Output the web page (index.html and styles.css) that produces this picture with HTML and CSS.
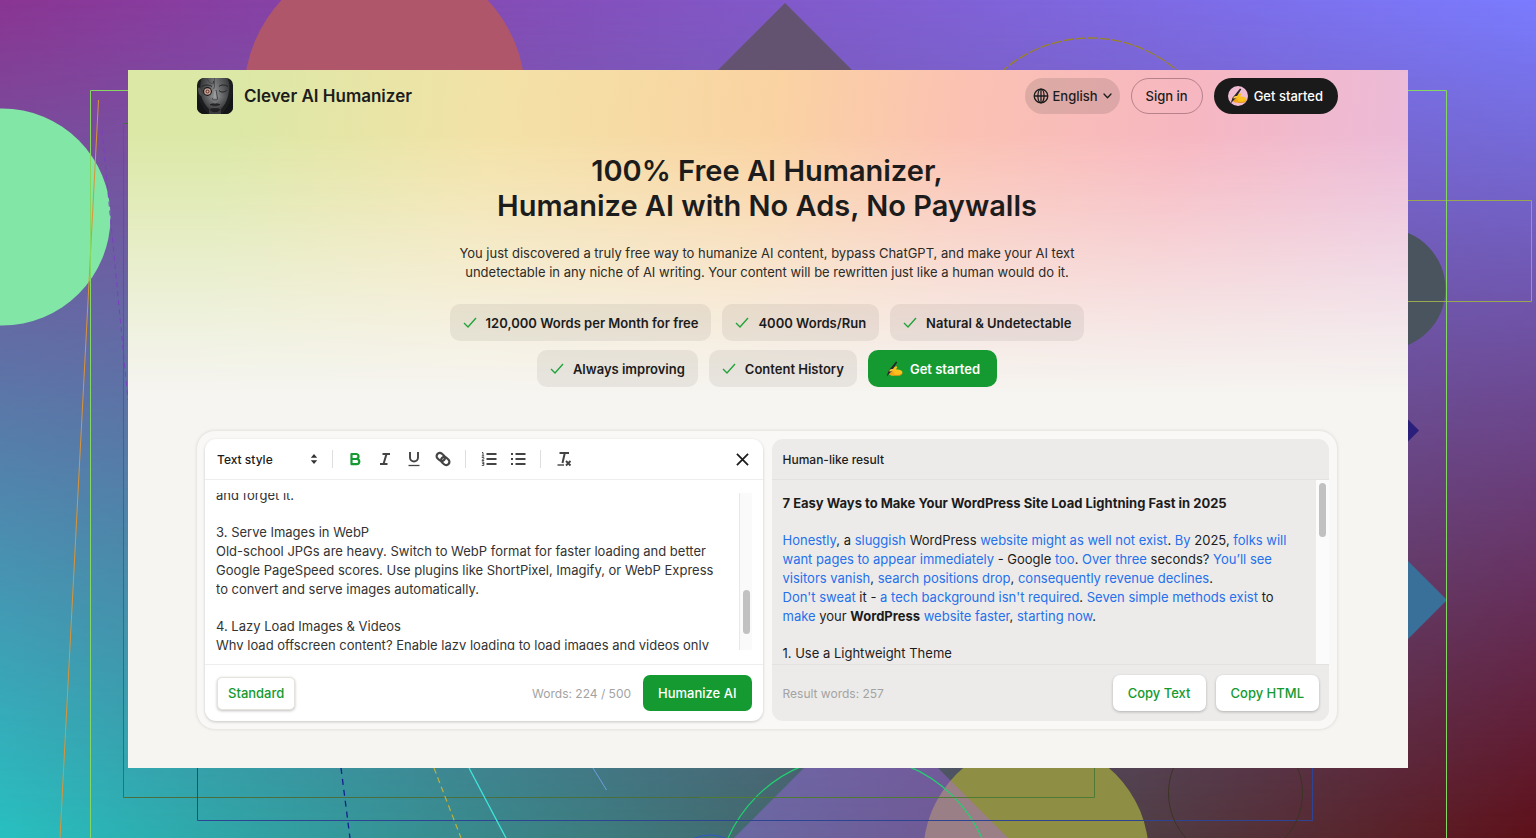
FILE: index.html
```html
<!DOCTYPE html>
<html lang="en">
<head>
<meta charset="utf-8">
<meta name="viewport" content="width=device-width, initial-scale=1">
<title>Clever AI Humanizer</title>
<link rel="stylesheet" href="styles.css">
</head>
<body>
<div class="backdrop" aria-hidden="true">
  <svg class="shapes" viewBox="0 0 1536 838" preserveAspectRatio="none" fill="none">
    <circle cx="2" cy="217" r="108.5" fill="#82e6a6"/>
    <circle cx="384.6" cy="96" r="140.8" fill="#b0566b"/>
    <path d="M785 3l110 110H675z" fill="#645271"/>
    <circle cx="1090" cy="171" r="133" stroke="#998322" stroke-width="1.300" stroke-dasharray="10 2"/>
    <circle cx="1385" cy="289" r="60.5" fill="#4a545f"/>
    <path d="M1419 430.500l-19-19v38z" fill="#2a1f7a"/>
    <path d="M1447 600l-60-60v120z" fill="#38709a"/>
    <path d="M98.500 100L60 838" stroke="#d9953a"/>
    <path d="M102 130L128 400" stroke="#7a3fc0" stroke-dasharray="5 4"/>
    <path d="M123.500 123.500H1094.500V797.500H123.500z" stroke="#4a6e3c"/>
    <path d="M197.500 150V820.500H1312.500V150" stroke="#2d4493"/>
    <path d="M341 768l9 70" stroke="#12208f" stroke-width="1.300" stroke-dasharray="6 5"/>
    <path d="M434 768l27 70" stroke="#bdb03c" stroke-width="1.200" stroke-dasharray="6 4"/>
    <path d="M469 768l37 70" stroke="#3fe6dc" stroke-width="1.300"/>
    <path d="M593 768l13.500 22" stroke="#6aa0dc"/>
    <circle cx="1036" cy="854" r="112.700" fill="#8e8f45"/>
    <path d="M871 701l150 150H721z" fill="#b065f9" fill-opacity=".37"/>
    <circle cx="855" cy="894.600" r="139" stroke="#22d070" stroke-width="1.200"/>
    <circle cx="710" cy="875" r="40" stroke="#2f58c8"/>
    <path d="M1094.500 768V797.500H700" stroke="#4f7a34"/>
    <path d="M700 820.500H1312.500" stroke="#2d4493"/>
    <circle cx="1235.500" cy="793" r="67" stroke="#3b3424"/>
    <path d="M1300 200.500H1531.500V301.500H1300" stroke="#99a850"/>
    <path d="M90.500 838V90.500H1446.500V838" stroke="#84d862"/>
  </svg>
</div>

<div class="page">
  <header class="topbar">
    <a class="brand" href="#">
      <svg class="brand-logo" viewBox="0 0 36 36" aria-hidden="true">
        <defs>
          <linearGradient id="skin" x1="0" x2="1"><stop offset="0" stop-color="#3a3b3d"/><stop offset=".5" stop-color="#97989a"/><stop offset="1" stop-color="#3f4042"/></linearGradient>
          <linearGradient id="shade" x1="0" y1="0" x2="0" y2="1"><stop offset="0" stop-color="#222" stop-opacity=".35"/><stop offset=".55" stop-color="#222" stop-opacity="0"/><stop offset="1" stop-color="#111" stop-opacity=".75"/></linearGradient>
          <clipPath id="tile"><rect width="36" height="36" rx="7"/></clipPath>
        </defs>
        <g clip-path="url(#tile)">
          <rect width="36" height="36" fill="#1c1d1f"/>
          <path d="M5 0h25c3 5 3 12 1 18-1 5-4 10-8 14-3 3-7 3-10 0C8 27 5 22 4 17 3 11 3 5 5 0z" fill="url(#skin)"/>
          <path d="M12 32l3-2h6l3 2v4H12z" fill="#3b3c3e"/>
          <path d="M5 0h25c3 5 3 12 1 18-1 5-4 10-8 14-3 3-7 3-10 0C8 27 5 22 4 17 3 11 3 5 5 0z" fill="url(#shade)"/>
          <path d="M1 10c1-1 3 0 3 2l1 6c-3 0-4-4-4-8z" fill="#4b4c4e"/>
          <path d="M17.500 0v9l-1 2M10 1l3 4 4 1" stroke="#37383a" stroke-width=".6" fill="none"/>
          <circle cx="16.500" cy="4" r=".7" fill="#1a1a1a"/>
          <path d="M5 8.500c3-2 7-2 10 0M22 8.500c2-2 6-2 9 0" stroke="#242527" stroke-width="1" fill="none"/>
          <circle cx="10.500" cy="13.500" r="4.400" fill="#1b1718"/>
          <circle cx="10.500" cy="13.500" r="3.300" fill="#c9a898"/>
          <circle cx="10.500" cy="13.500" r="2" fill="#6f3d39"/>
          <circle cx="10.500" cy="13.500" r="1" fill="#e0b29c"/>
          <path d="M22 12.500c2 2 5 2 7.500 0" stroke="#1c1c1e" stroke-width="1" fill="none"/>
          <path d="M19 12l1.500 8c.5 1.500-.5 2-2.500 2s-3-.5-2.500-2" stroke="#36373a" stroke-width=".8" fill="none"/>
          <path d="M18 13v7" stroke="#a5a6a8" stroke-width="1"/>
          <path d="M13 26.500c2-1.500 3.500-1.500 5-.8 1.500-.7 3-.7 5 .8-3 2.700-7 2.700-10 0z" fill="#333335"/>
          <path d="M13 26.500c3 .5 7 .5 10 0" stroke="#141415" stroke-width=".6" fill="none"/>
          <path d="M0 16c2 8 6 14 11 20H0zM36 14c-2 9-6 16-11 22h11z" fill="#141517"/>
        </g>
      </svg>
      <span>Clever AI Humanizer</span>
    </a>
    <nav class="topnav">
      <label class="lang">
        <svg width="16" height="16" viewBox="0 0 16 16" fill="none" stroke="#1c1c1c" stroke-width="1.300" aria-hidden="true"><circle cx="8" cy="8" r="6.800"/><ellipse cx="8" cy="8" rx="3.100" ry="6.800"/><path d="M1.200 8h13.600M8 1.200v13.600"/></svg>
        <select aria-label="Language"><option>English</option></select>
        <svg width="9" height="6" viewBox="0 0 9 6" fill="none" stroke="#1c1c1c" stroke-width="1.300" stroke-linecap="round" stroke-linejoin="round" aria-hidden="true"><path d="M1 1l3.500 3.700L8 1"/></svg>
      </label>
      <button class="signin" type="button">Sign in</button>
      <button class="start-dark" type="button">
        <span class="hand-disc"><svg width="18" height="18" viewBox="0 0 18 18" aria-hidden="true"><use href="#hand"/></svg></span>
        Get started
      </button>
    </nav>
  </header>

  <main>
    <section class="hero">
      <h1>100% Free AI Humanizer,<br>Humanize AI with No Ads, No Paywalls</h1>
      <p>You just discovered a truly free way to humanize AI content, bypass ChatGPT, and make your AI text<br>undetectable in any niche of AI writing. Your content will be rewritten just like a human would do it.</p>
      <ul class="perks">
        <li><svg class="tick" viewBox="0 0 14 11" aria-hidden="true"><path d="M1 6l4 4 8-9"/></svg>120,000 Words per Month for free</li>
        <li><svg class="tick" viewBox="0 0 14 11" aria-hidden="true"><path d="M1 6l4 4 8-9"/></svg>4000 Words/Run</li>
        <li><svg class="tick" viewBox="0 0 14 11" aria-hidden="true"><path d="M1 6l4 4 8-9"/></svg>Natural &amp; Undetectable</li>
      </ul>
      <div class="perk-row">
        <ul class="perks">
          <li><svg class="tick" viewBox="0 0 14 11" aria-hidden="true"><path d="M1 6l4 4 8-9"/></svg>Always improving</li>
          <li><svg class="tick" viewBox="0 0 14 11" aria-hidden="true"><path d="M1 6l4 4 8-9"/></svg>Content History</li>
        </ul>
        <button class="start-green" type="button">
          <svg width="18" height="18" viewBox="0 0 18 18" aria-hidden="true">
            <g id="hand">
              <path d="M4.500 9.800L10.500 6.500c1.200-.6 2 .4 1.500 1.200l-1 1.500 3.200.6c2.200.4 3.200 1.200 3.100 2.800-.1 1.800-1.600 2.900-4 2.900H7.500c-1.700 0-3-.6-3.400-2l-1-2z" fill="#fcc21b"/>
              <path d="M3.700 11l3.600-.8c1-.2 1.700 1 .8 1.400l-1.400.7 2.300.2c.9.200.9 1.200 0 1.300l-2.600.2 2.800.5c.5.300.2 1-.5 1H7.100c-2 0-3.400-.9-3.600-2.200z" fill="#f2a01a"/>
              <path d="M9 15.300h4.500c2.200 0 3.600-1 3.800-2.600" stroke="#e08a16" stroke-width=".9" fill="none"/>
              <path d="M11 1.500l1.300.8-5.700 8.900-5 5.300 1.900-5.800L6 7.800z" fill="#27272b"/>
              <path d="M4.500 9.900c1.600-1 3-1.200 3.600-.6.500.6-.4 1.200-1.600 1.600l-2 .8z" fill="#fdd04d"/>
            </g>
          </svg>
          Get started
        </button>
      </div>
    </section>

    <section class="workspace">
      <article class="panel panel-source">
        <div class="toolbar">
          <label class="style-pick">
            <select aria-label="Text style"><option>Text style</option></select>
            <svg width="8" height="10" viewBox="0 0 8 10" fill="#333" aria-hidden="true"><path d="M4 0l3.200 3.800H.8zM4 10L.8 6.200h6.400z"/></svg>
          </label>
          <div class="tool-group">
            <button type="button" aria-label="Bold"><svg viewBox="0 0 18 18" fill="none" stroke="#149a30" stroke-width="2.200" stroke-linejoin="round"><path d="M4.500 4H9a2.500 2.500 0 0 1 0 5H4.500zM4.500 9h5.200a2.600 2.600 0 0 1 0 5.200H4.500z"/></svg></button>
            <button type="button" aria-label="Italic"><svg viewBox="0 0 18 18" fill="none" stroke="#444" stroke-width="2"><path d="M6.500 4H14M4 14h7.500M10.500 4l-3 10"/></svg></button>
            <button type="button" aria-label="Underline"><svg viewBox="0 0 18 18" fill="none" stroke="#444" stroke-width="1.900"><path d="M5 2v5.500a4 4 0 0 0 8 0V2"/><path d="M3.500 15.500h11" stroke-width="1.300"/></svg></button>
            <button type="button" aria-label="Link"><svg viewBox="0 0 18 18" fill="none" stroke="#444" stroke-width="2.200"><g transform="rotate(42 9 9)"><rect x="1.500" y="5.800" width="9" height="6.400" rx="3.200"/><rect x="7.500" y="5.800" width="9" height="6.400" rx="3.200"/></g></svg></button>
          </div>
          <div class="tool-group">
            <button type="button" aria-label="Numbered list"><svg viewBox="0 0 18 18" fill="none" stroke="#444"><path d="M6.500 4H16.500M6.500 9H16.500M6.500 14H16.500" stroke-width="2"/><path d="M2 2.500h1V6M1.800 6h2.400M1.800 7.600h2v1L2 10.400h2.200M1.800 12h2v1.500H2.500h1.300v1.900h-2" stroke-width="1"/></svg></button>
            <button type="button" aria-label="Bulleted list"><svg viewBox="0 0 18 18" fill="none" stroke="#444" stroke-width="2"><path d="M6.500 4H16.500M6.500 9H16.500M6.500 14H16.500M2 4h2M2 9h2M2 14h2"/></svg></button>
          </div>
          <div class="tool-group">
            <button type="button" aria-label="Clear formatting"><svg viewBox="0 0 18 18" fill="none" stroke="#444"><path d="M4.500 3H14M9.800 3L7.500 13" stroke-width="2"/><path d="M2.500 15h6.500" stroke-width="1.400"/><path d="M11 11l4.500 4.500M15.500 11L11 15.500" stroke-width="1.900"/></svg></button>
          </div>
          <button class="close" type="button" aria-label="Close"><svg viewBox="0 0 14 14" fill="none" stroke="#1c1c1c" stroke-width="1.900"><path d="M1 1l12 12M13 1L1 13"/></svg></button>
        </div>
        <div class="panel-body source-body">
          <div class="source-scroll">
            <div class="source-text" role="textbox" aria-multiline="true" aria-label="Your text" contenteditable="true" spellcheck="false">
              <p>and forget it.</p>
              <p>3. Serve Images in WebP<br>Old-school JPGs are heavy. Switch to WebP format for faster loading and better<br>Google PageSpeed scores. Use plugins like ShortPixel, Imagify, or WebP Express<br>to convert and serve images automatically.</p>
              <p>4. Lazy Load Images &amp; Videos<br>Why load offscreen content? Enable lazy loading to load images and videos only</p>
            </div>
          </div>
          <div class="track track-source"><span class="thumb"></span></div>
        </div>
        <div class="panel-foot">
          <button class="mode" type="button">Standard</button>
          <span class="count push">Words: 224 / 500</span>
          <button class="run" type="button">Humanize AI</button>
        </div>
      </article>

      <article class="panel panel-result">
        <h2 class="result-title">Human-like result</h2>
        <div class="panel-body">
          <div class="result-text">
            <p><b>7 Easy Ways to Make Your WordPress Site Load Lightning Fast in 2025</b></p>
            <p><em>Honestly</em>, a <em>sluggish</em> WordPress <em>website might as well not exist</em>. <em>By</em> 2025, <em>folks will</em><br>
            <em>want pages to appear immediately</em> - Google <em>too</em>. <em>Over three</em> seconds? <em>You’ll see</em><br>
            <em>visitors vanish</em>, <em>search positions drop</em>, <em>consequently revenue declines</em>.<br>
            <em>Don't sweat</em> it - <em>a tech background isn't required</em>. <em>Seven simple methods exist</em> to<br>
            <em>make</em> your <b>WordPress</b> <em>website faster</em>, <em>starting now</em>.</p>
            <p>1. Use a Lightweight Theme</p>
          </div>
          <div class="track track-result"><span class="thumb"></span></div>
        </div>
        <div class="panel-foot">
          <span class="count">Result words: 257</span>
          <button class="copy push" type="button">Copy Text</button>
          <button class="copy" type="button">Copy HTML</button>
        </div>
      </article>
    </section>
  </main>
</div>
</body>
</html>
```

FILE: styles.css
```css
* { box-sizing: border-box; }

body {
  margin: 0;
  min-height: 100vh;
  padding: 70px 128px;
  position: relative;
  overflow-x: hidden;
  font-family: Inter, "Liberation Sans", sans-serif;
  font-size: 13px;
  color: #1c1c1c;
}

button, select { font: inherit; color: inherit; border: 0; background: none; padding: 0; cursor: pointer; }
select { appearance: none; outline: 0; }
h1, h2, p, ul { margin: 0; padding: 0; }
svg { display: block; flex: none; }
.push { margin-left: auto; }

/* Four-corner colour field */
.backdrop {
  position: absolute;
  inset: 0;
  z-index: -1;
  overflow: hidden;
  background: linear-gradient(90deg, #8a3593, #7a7cff);
}
.backdrop::before {
  content: "";
  position: absolute;
  inset: 0;
  background: linear-gradient(90deg, #27c0c0, #5e1018);
  mask-image: linear-gradient(transparent, #000);
}
.shapes { position: absolute; width: 100%; height: 100%; }

.page {
  position: relative;
  min-height: calc(100vh - 140px);
  padding: 8px 70px 38px 68px;
  background: #f6f5f1;
}
.page::before {
  content: "";
  position: absolute;
  inset: 0 0 auto;
  height: 324px;
  background: linear-gradient(97deg, #dbe8a6 0%, #dbe8a6 8%, #f3e2a7 28%, #fad3a2 49%, #fbc2b2 63%, #f7b7c0 80%, #eabbdb 100%);
  mask-image: linear-gradient(#000 0, #000 20%, rgba(0, 0, 0, .78) 38%, rgba(0, 0, 0, .46) 62%, rgba(0, 0, 0, .2) 82%, transparent 100%);
}
.topbar, main { position: relative; }

.topbar { display: flex; align-items: center; justify-content: space-between; }
.brand { display: flex; align-items: center; gap: 11px; margin-left: 1px; font-size: 17px; font-weight: 600; color: inherit; text-decoration: none; }
.brand-logo { width: 36px; height: 36px; }
.topnav { display: flex; gap: 11px; }
.topnav > * { height: 36px; border-radius: 18px; display: flex; align-items: center; font-weight: 500; }
.lang { background: rgba(60, 50, 50, .14); padding: 0 8px; gap: 4px; }
.signin { border: 1px solid rgba(60, 30, 40, .35); padding: 0 14px; }
.start-dark { background: #1a1a1a; color: #fff; padding: 0 15px 0 14px; gap: 6px; }
.hand-disc { width: 20px; height: 20px; padding: 1px; border-radius: 50%; background: #f0bcd2; overflow: hidden; }

.hero { padding-top: 39px; text-align: center; }
h1 { font-size: 29px; line-height: 35px; font-weight: 600; }
.hero p { margin-top: 21px; line-height: 19px; color: #2b2b28; }
.perks { display: flex; justify-content: center; gap: 11px; list-style: none; }
.hero > .perks { margin-top: 22px; }
.perk-row { display: flex; justify-content: center; gap: 11px; margin-top: 9px; }
.perks li, .start-green { display: flex; align-items: center; height: 37px; border-radius: 10px; font-weight: 600; }
.perks li { background: rgba(60, 50, 50, .08); padding: 0 13px; gap: 9px; }
.tick { width: 14px; height: 11px; fill: none; stroke: #22a33d; stroke-width: 1.4; }
.start-green { background: #149a30; color: #fff; padding: 0 17px; gap: 7px; }

.workspace {
  display: grid;
  grid-template-columns: 1fr 1fr;
  gap: 9px;
  margin-top: 43px;
  padding: 8px;
  border: 1px solid #e9e8e4;
  border-radius: 19px;
  background: #f9f8f6;
  box-shadow: 0 0 3px rgba(0, 0, 0, .08);
}
.panel { display: flex; flex-direction: column; min-width: 0; border-radius: 11px; }
.panel-source { background: #fff; box-shadow: 0 1px 3px rgba(0, 0, 0, .2); }
.panel-result { background: #ecebea; }

.toolbar { display: flex; align-items: center; height: 41px; padding: 0 14px 0 12px; border-bottom: 1px solid #eee; }
.style-pick { display: flex; align-items: center; justify-content: space-between; width: 101px; margin-right: 14px; font-size: 12px; font-weight: 500; }
.tool-group { display: flex; gap: 11px; padding: 0 13px 0 14px; border-left: 1px solid #dedede; }
.tool-group svg { width: 18px; height: 18px; }
.close { margin-left: auto; }
.close svg { width: 13px; height: 13px; }

.panel-body { display: flex; height: 184px; line-height: 19px; overflow: hidden; }
.source-body { padding: 13px 11px 14px; gap: 8px; }
.source-scroll { flex: 1; display: flex; flex-direction: column; justify-content: center; overflow: hidden; color: #333; }
.source-text { flex: none; padding-bottom: 2px; outline: 0; white-space: nowrap; }
.panel-body p + p { margin-top: 18px; }
.track { flex: none; width: 13px; padding: 0 3px; margin-left: auto; }
.track-source { background: #fafafa; border-left: 1px solid #e8e8e8; padding-top: 97px; }
.track-result { background: #fbfbfb; padding-top: 3px; }
.thumb { display: block; width: 7px; height: 44px; border-radius: 4px; background: #c1c1c1; }
.track-result .thumb { height: 54px; }

.result-title { display: flex; align-items: center; height: 41px; padding: 0 11px; border-bottom: 1px solid #e3e2e1; font-size: 12px; font-weight: 500; }
.result-text { padding: 14px 0 0 11px; white-space: nowrap; }
.result-text em { font-style: normal; color: #2570eb; }

.panel-foot { display: flex; align-items: center; gap: 10px; height: 57px; padding: 0 10px 0 11px; border-top: 1px solid #eee; }
.panel-result .panel-foot { border-color: #e3e2e1; }
.count { font-size: 12px; color: #a3a3a3; }
.panel-foot button { height: 36px; border-radius: 7px; padding: 0 15px; font-weight: 500; }
.panel-foot .mode { height: 33px; padding: 0 10px; margin-left: 1px; background: #fff; color: #149a30; border: 1px solid #e6e3dc; border-radius: 5px; box-shadow: 0 1px 3px rgba(0, 0, 0, .25); }
.panel-foot .run { margin: 0 1px 0 2px; background: #149a30; color: #fff; }
.panel-foot .copy { background: #fff; color: #149a30; box-shadow: 0 1px 3px rgba(0, 0, 0, .25); }
```
